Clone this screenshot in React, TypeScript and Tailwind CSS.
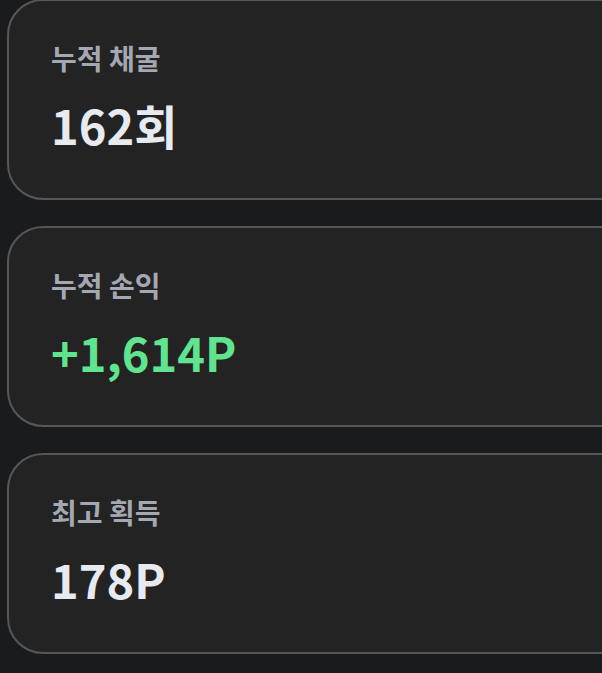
import React from "react";

const font = { fontFamily: '"Noto Sans CJK KR", "Noto Sans", sans-serif' };

function Card({ label, value, green }: { label: string; value: string; green?: boolean }) {
  return (
    <div className="h-[201px] w-[640px] shrink-0 rounded-[36px] border-2 border-[#56575a] bg-[#232323] pl-[42px] pt-[38px]">
      <div className="text-[28px] font-bold leading-[38px] text-[#a3a8b3]">{label}</div>
      <div
        className={
          "mt-[18px] text-[47px] font-bold leading-[60px] " +
          (green ? "text-[#62e38f]" : "text-[#e8eaf2]")
        }
      >
        {value}
      </div>
    </div>
  );
}

export default function App() {
  return (
    <div className="h-[673px] w-[602px] overflow-hidden bg-[#1a1b1d]" style={font}>
      <div className="-mt-[1px] flex flex-col gap-[26px] pl-[7px]">
        <Card label="누적 채굴" value="162회" />
        <Card label="누적 손익" value="+1,614P" green />
        <Card label="최고 획득" value="178P" />
      </div>
    </div>
  );
}
